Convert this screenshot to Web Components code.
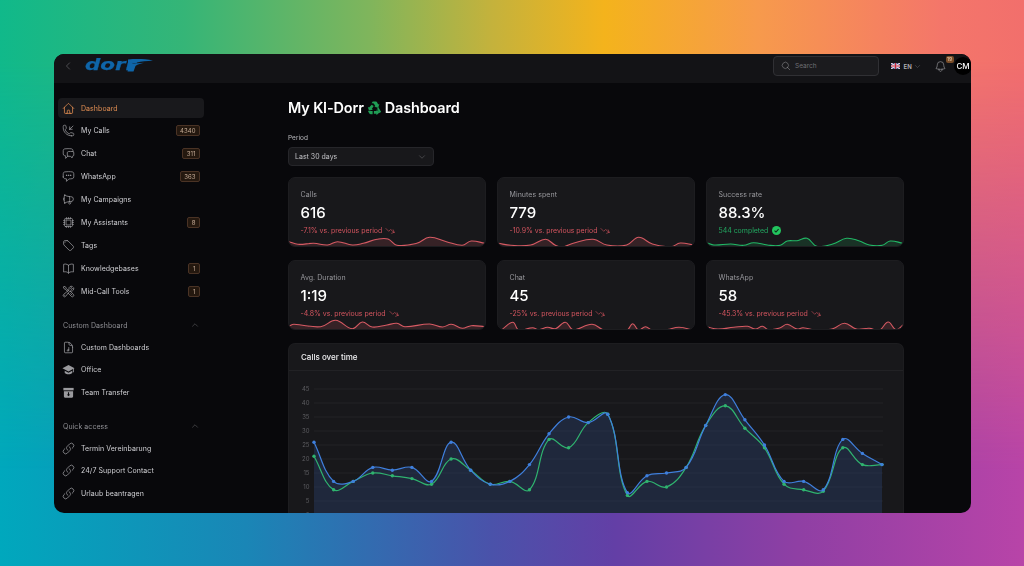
<!DOCTYPE html>
<html lang="en">
<head>
<meta charset="utf-8">
<title>Dashboard</title>
<style>
html, body { margin: 0; height: 100%; overflow: hidden; }
body {
    position: relative;
    font-family: Inter, "Liberation Sans", sans-serif;
    background: linear-gradient(90deg, #00a8bd 0%, #1a86b6 24%, #4a52aa 48%, #633fa6 60%, #8f3fa4 78%, #b844a8 100%);
}
body::before {
    content: "";
    position: absolute;
    inset: 0;
    background: linear-gradient(90deg, #10b98a 0%, #35b577 18%, #7fb55c 36%, #c4b23c 48%, #f4b31c 59%, #f79a4c 74%, #f4766a 92%, #f26f6c 100%);
    -webkit-mask-image: linear-gradient(180deg, #000 0, #000 60px, transparent 470px);
    mask-image: linear-gradient(180deg, #000 0, #000 60px, transparent 470px);
}
dash-page { position: relative; }
</style>
</head>
<body>
<dash-page>
    <top-bar></top-bar>
    <side-bar slot="side">
        <nav-item icon="home" active>Dashboard</nav-item>
        <nav-item icon="phone" badge="4340">My Calls</nav-item>
        <nav-item icon="chat" badge="311">Chat</nav-item>
        <nav-item icon="bubble" badge="363">WhatsApp</nav-item>
        <nav-item icon="megaphone">My Campaigns</nav-item>
        <nav-item icon="cpu" badge="8">My Assistants</nav-item>
        <nav-item icon="tag">Tags</nav-item>
        <nav-item icon="book" badge="1">Knowledgebases</nav-item>
        <nav-item icon="tools" badge="1">Mid-Call Tools</nav-item>
        <nav-section label="Custom Dashboard">
            <nav-item icon="doc">Custom Dashboards</nav-item>
            <nav-item icon="cap">Office</nav-item>
            <nav-item icon="box">Team Transfer</nav-item>
        </nav-section>
        <nav-section label="Quick access">
            <nav-item icon="link">Termin Vereinbarung</nav-item>
            <nav-item icon="link">24/7 Support Contact</nav-item>
            <nav-item icon="link">Urlaub beantragen</nav-item>
        </nav-section>
    </side-bar>
    <dash-main slot="main">
        <stat-card tone="down" points="0,8.7 9,11.3 25,10.3 39,12 49,8.7 64,12 75,10.3 89,6.3 100,6 109,12.3 129,10.3 142,4.3 159,8.7 175,12.3 184,8 198,10.3">
            <span slot="label">Calls</span>616<span slot="delta">-7.1% vs. previous period</span>
        </stat-card>
        <stat-card tone="down" points="0,10.3 13,12.3 33,12 48,6.3 58,12.3 65,14 76,10.3 96,6.3 110,12 130,12 142,4.3 156,11 175,13.7 184,10 198,12">
            <span slot="label">Minutes spent</span>779<span slot="delta">-10.9% vs. previous period</span>
        </stat-card>
        <stat-card tone="up" points="0,9.7 7,12 24,11 37,12.3 47,9.7 61,12 74,12.3 81,8 91,7.7 101,5.3 111,13.3 127,11 141,5.3 154,8 164,12 177,12.3 185,8 198,10.3">
            <span slot="label">Success rate</span>88.3%<span slot="delta">544 completed</span>
        </stat-card>
        <stat-card tone="down" points="0,10 5,8.3 32,10.7 47,4.3 64,12.7 74,6 84,11 99,9 109,7.3 117,10.7 142,8 155,11 164,8.3 175,12.3 184,9.7 198,10.7">
            <span slot="label">Avg. Duration</span>1:19<span slot="delta">-4.8% vs. previous period</span>
        </stat-card>
        <stat-card tone="down" points="0,14.3 3,14 15,6.3 21,14 35,11.7 41,13.7 50,11.3 58,12.7 68,6.3 76,13.7 95,8.3 108,14.3 130,14.3 136,7.7 142,14 149,10.7 156,14.3 170,13.7 183,11.3 198,14.3">
            <span slot="label">Chat</span>45<span slot="delta">-25% vs. previous period</span>
        </stat-card>
        <stat-card tone="down" points="0,11 11,13 27,11.3 41,10.3 49,13 56,10.3 62,13.7 74,11.7 81,8.3 91,13 97,11.7 111,14.3 127,12.7 139,7.3 151,13 164,12.3 174,14.3 183,6 191,13.7 198,9">
            <span slot="label">WhatsApp</span>58<span slot="delta">-45.3% vs. previous period</span>
        </stat-card>
        <line-chart slot="chart">Calls over time</line-chart>
    </dash-main>
</dash-page>

<script>
const ICONS = {
    home: '<path d="M2.25 12l8.954-8.955c.44-.439 1.152-.439 1.591 0L21.75 12M4.5 9.75v10.125c0 .621.504 1.125 1.125 1.125H9.75v-4.875c0-.621.504-1.125 1.125-1.125h2.25c.621 0 1.125.504 1.125 1.125V21h4.125c.621 0 1.125-.504 1.125-1.125V9.75M8.25 21h8.25"/>',
    phone: '<path d="M14.25 9.75v-4.5m0 4.5h4.5m-4.5 0l6-6m-3 18c-8.284 0-15-6.716-15-15V4.5A2.25 2.25 0 014.5 2.25h1.372c.516 0 .966.351 1.091.852l1.106 4.423c.11.44-.054.902-.417 1.173l-1.293.97a1.062 1.062 0 00-.38 1.21 12.035 12.035 0 007.143 7.143c.441.162.928-.004 1.21-.38l.97-1.293a1.125 1.125 0 011.173-.417l4.423 1.106c.5.125.852.575.852 1.091V19.5a2.25 2.25 0 01-2.25 2.25h-2.25z"/>',
    chat: '<path d="M20.25 8.511c.884.284 1.5 1.128 1.5 2.097v4.286c0 1.136-.847 2.1-1.98 2.193-.34.027-.68.052-1.02.072v3.091l-3-3c-1.354 0-2.694-.055-4.02-.163a2.115 2.115 0 01-.825-.242m9.345-8.334a2.126 2.126 0 00-.476-.095 48.64 48.64 0 00-8.048 0c-1.131.094-1.976 1.057-1.976 2.192v4.286c0 .837.46 1.58 1.155 1.951m9.345-8.334V6.637c0-1.621-1.152-3.026-2.76-3.235A48.455 48.455 0 0011.25 3c-2.115 0-4.198.137-6.24.402-1.608.209-2.76 1.614-2.76 3.235v6.226c0 1.621 1.152 3.026 2.76 3.235.577.075 1.157.14 1.74.194V21l4.155-4.155"/>',
    bubble: '<path d="M8.625 9.75a.375.375 0 11-.75 0 .375.375 0 01.75 0zm0 0H8.25m4.125 0a.375.375 0 11-.75 0 .375.375 0 01.75 0zm0 0H12m4.125 0a.375.375 0 11-.75 0 .375.375 0 01.75 0zm0 0h-.375m-13.5 3.01c0 1.6 1.123 2.994 2.707 3.227 1.087.16 2.185.283 3.293.369V21l4.184-4.183a1.14 1.14 0 01.778-.332 48.294 48.294 0 005.83-.498c1.585-.233 2.708-1.626 2.708-3.228V6.741c0-1.602-1.123-2.995-2.707-3.228A48.394 48.394 0 0012 3c-2.392 0-4.744.175-7.043.513C3.373 3.746 2.25 5.14 2.25 6.741v6.018z"/>',
    megaphone: '<g transform="matrix(-1 0 0 1 24 0)"><path d="M10.34 15.84c-.688-.06-1.386-.09-2.09-.09H7.5a4.5 4.5 0 110-9h.75c.704 0 1.402-.03 2.09-.09m0 9.18c.253.962.584 1.892.985 2.783.247.55.06 1.21-.463 1.511l-.657.38c-.551.318-1.26.117-1.527-.461a20.845 20.845 0 01-1.44-4.282m3.102.069a18.03 18.03 0 01-.59-4.59c0-1.586.205-3.124.59-4.59m0 9.18a23.848 23.848 0 018.835 2.535M10.34 6.66a23.847 23.847 0 008.835-2.535m0 0A23.74 23.74 0 0018.795 3m.38 1.125a23.91 23.91 0 011.014 5.395m-1.014 8.855c-.118.38-.245.754-.38 1.125m.38-1.125a23.91 23.91 0 001.014-5.395m0-3.46c.495.413.811 1.035.811 1.73 0 .695-.316 1.317-.811 1.73m0-3.46a24.347 24.347 0 010 3.46"/></g>',
    cpu: '<path d="M8.25 3v1.5M4.5 8.25H3m18 0h-1.5M4.5 12H3m18 0h-1.5m-15 3.75H3m18 0h-1.5M8.25 19.5V21M12 3v1.5m0 15V21m3.75-18v1.5m0 15V21m-9-1.5h10.5a2.25 2.25 0 002.25-2.25V6.75a2.25 2.25 0 00-2.25-2.25H6.75A2.25 2.25 0 004.5 6.75v10.5a2.25 2.25 0 002.25 2.25zm.75-12h9v9h-9v-9z"/>',
    tag: '<path d="M9.568 3H5.25A2.25 2.25 0 003 5.25v4.318c0 .597.237 1.17.659 1.591l9.581 9.581c.699.699 1.78.872 2.607.33a18.095 18.095 0 005.223-5.223c.542-.827.369-1.908-.33-2.607L11.16 3.66A2.25 2.25 0 009.568 3z"/><path d="M6 6h.008v.008H6V6z"/>',
    book: '<path d="M12 6.042A8.967 8.967 0 006 3.75c-1.052 0-2.062.18-3 .512v14.25A8.987 8.987 0 016 18c2.305 0 4.408.867 6 2.292m0-14.25a8.966 8.966 0 016-2.292c1.052 0 2.062.18 3 .512v14.25A8.987 8.987 0 0018 18a8.967 8.967 0 00-6 2.292m0-14.25v14.25"/>',
    tools: '<path d="M11.42 15.17L17.25 21A2.652 2.652 0 0021 17.25l-5.877-5.877M11.42 15.17l2.496-3.03c.317-.384.74-.626 1.208-.766M11.42 15.17l-4.655 5.653a2.548 2.548 0 11-3.586-3.586l6.837-5.63m5.108-.233c.55-.164 1.163-.188 1.743-.14a4.5 4.5 0 004.486-6.336l-3.276 3.277a3.004 3.004 0 01-2.25-2.25l3.276-3.276a4.5 4.5 0 00-6.336 4.486c.091 1.076-.071 2.264-.904 2.95l-.102.085m-1.745 1.437L5.909 7.5H4.5L2.25 3.75l1.5-1.5L7.5 4.5v1.409l4.26 4.26m-1.745 1.437l1.745-1.437m6.615 8.206L15.75 15.75M4.867 19.125h.008v.008h-.008v-.008z"/>',
    doc: '<path d="M19.5 11.25v9.375c0 .621-.504 1.125-1.125 1.125H5.625c-.621 0-1.125-.504-1.125-1.125V3.375c0-.621.504-1.125 1.125-1.125H10.5a9 9 0 019 9z"/><path d="M13 2.6v3.4c0 1.2 1 2.2 2.2 2.2h3.4"/><path d="M12.5 12v5.2m0 0a1.4 1.4 0 11-1.4-1.2h1.4"/>',
    cap: '<path fill="currentColor" stroke="none" d="M12 3.6L.8 9.6 12 15.6l8.2-4.4v6h1.6V10.3l1.4-.7z"/><path fill="currentColor" stroke="none" d="M5 14.4v4.2c3.6 3 10.4 3 14 0v-4.2l-7 3.8z"/>',
    box: '<path fill="currentColor" stroke="none" d="M2.5 3.5h19v4.5h-19z"/><path fill="currentColor" stroke="none" fill-rule="evenodd" d="M3.5 9.5h17v10a2 2 0 01-2 2h-13a2 2 0 01-2-2zM11 11.5v4H8.8l3.2 3.6 3.2-3.6H13v-4z"/>',
    link: '<path d="M13.19 8.688a4.5 4.5 0 011.242 7.244l-4.5 4.5a4.5 4.5 0 01-6.364-6.364l1.757-1.757m13.35-.622l1.757-1.757a4.5 4.5 0 00-6.364-6.364l-4.5 4.5a4.5 4.5 0 001.242 7.244"/>',
    up: '<path d="M4.5 15.75l7.5-7.5 7.5 7.5"/>',
    down: '<path d="M19.5 8.25l-7.5 7.5-7.5-7.5"/>',
    left: '<path d="M15.75 19.5L8.25 12l7.5-7.5"/>',
    search: '<path d="M21 21l-5.197-5.197m0 0A7.5 7.5 0 105.196 5.196a7.5 7.5 0 0010.607 10.607z"/>',
    bell: '<path d="M14.857 17.082a23.848 23.848 0 005.454-1.31A8.967 8.967 0 0118 9.75V9A6 6 0 006 9v.75a8.967 8.967 0 01-2.312 6.022c1.733.64 3.56 1.085 5.455 1.31m5.714 0a24.255 24.255 0 01-5.714 0m5.714 0a3 3 0 11-5.714 0"/>',
    trend: '<path d="M2.25 6L9 12.75l4.306-4.307a11.95 11.95 0 015.814 5.519l2.74 1.22m0 0l-5.94 2.28m5.94-2.28l-2.28-5.941"/>'
};

// spline weighted by segment length, short segments next to long ones don't overshoot
function smooth(pts, t) {
    const ctrl = pts.map((cur, i) => {
        const prev = pts[i - 1] || cur, next = pts[i + 1] || cur;
        const d01 = Math.hypot(cur[0] - prev[0], cur[1] - prev[1]);
        const d12 = Math.hypot(next[0] - cur[0], next[1] - cur[1]);
        const sum = d01 + d12 || 1;
        const fa = t * d01 / sum, fb = t * d12 / sum;
        return {
            inX: cur[0] - fa * (next[0] - prev[0]), inY: cur[1] - fa * (next[1] - prev[1]),
            outX: cur[0] + fb * (next[0] - prev[0]), outY: cur[1] + fb * (next[1] - prev[1])
        };
    });
    let d = `M${pts[0][0]} ${pts[0][1]}`;
    for (let i = 1; i < pts.length; i++) {
        const a = ctrl[i - 1], b = ctrl[i];
        d += `C${a.outX.toFixed(2)} ${a.outY.toFixed(2)} ${b.inX.toFixed(2)} ${b.inY.toFixed(2)} ${pts[i][0].toFixed(2)} ${pts[i][1].toFixed(2)}`;
    }
    return d;
}

class appIcon extends HTMLElement {
    static get observedAttributes() { return ['name']; }
    constructor() {
        super();
        this.attachShadow({ mode: 'open' });
        this.shadowRoot.innerHTML = `
            <style>
                :host{display:inline-flex;width:13px;height:13px;flex:none}
                svg{width:100%;height:100%;display:block;fill:none;stroke:currentColor;stroke-width:1.4;stroke-linecap:round;stroke-linejoin:round}
            </style>
            <svg viewBox="0 0 24 24"></svg>`;
    }
    attributeChangedCallback() {
        this.shadowRoot.querySelector('svg').innerHTML = ICONS[this.getAttribute('name')] || '';
    }
}
customElements.define('app-icon', appIcon);

const dash_page = document.createElement('template');
dash_page.innerHTML = `
    <style>
        :host{display:block;padding:54px 0 0 54px;height:566px;box-sizing:border-box}
        .window{width:917px;height:459px;border-radius:10px;overflow:hidden;background:#08080b;display:flex;flex-direction:column;filter:blur(.3px)}
        .body{display:flex;flex:1;min-height:0}
    </style>
    <div class="window">
        <slot></slot>
        <div class="body">
            <slot name="side"></slot>
            <slot name="main"></slot>
        </div>
    </div>
`;
class dashPage extends HTMLElement {
    constructor() {
        super();
        this.attachShadow({ mode: 'open' });
        this.shadowRoot.appendChild(dash_page.content.cloneNode(true));
    }
}
customElements.define('dash-page', dashPage);

const top_bar = document.createElement('template');
top_bar.innerHTML = `
    <style>
        :host{display:flex;align-items:center;height:24px;padding:0 0 5px 9px;flex:none;background:#131316;color:#8b8b90;font-size:6.5px}
        .back{width:10px;height:10px;color:#77777c;margin-right:12px}
        .logo{position:relative;width:70px;height:22px;display:block}
        .logo span{position:absolute;left:0;top:-3.5px;font:italic 700 15.5px/26px "DejaVu Sans",sans-serif;color:#0f65a8;-webkit-text-stroke:.25px #0f65a8;transform:scaleX(1.38);transform-origin:left center}
        .logo svg{position:absolute;left:40px;top:0;width:30px;height:22px}
        .right{margin-left:auto;display:flex;align-items:center}
        .search{width:106px;height:20px;box-sizing:border-box;margin-right:12px;background:#1b1b1e;border:1px solid #303034;border-radius:4px;display:flex;align-items:center;padding-left:7px;gap:4px;color:#6f6f74}
        .search app-icon{width:10px;height:10px;color:#88888c}
        .flag{width:9px;height:6px;display:block}
        .lang{display:flex;align-items:center;gap:3.5px;color:#b4b4b8;font-weight:600;width:37px;font-size:6px}
        .lang app-icon{width:7px;height:7px;margin-left:-1px;color:#77777c}
        .bell{position:relative;width:13px;height:13px;margin-right:7px;margin-left:6px;color:#88888c}
        .bell app-icon{width:13px;height:13px}
        .count{position:absolute;left:11.5px;top:-3.5px;width:8px;height:7px;border-radius:2px;background:#7a4d28;color:#ecd2b4;font-size:5px;line-height:7px;text-align:center}
        .avatar{width:18px;height:18px;border-radius:50%;background:#000;color:#fff;font-size:8px;line-height:18px;text-align:center;font-weight:500;margin-right:-1px}
    </style>
    <app-icon class="back" name="left"></app-icon>
    <div class="logo">
        <span>dorr</span>
        <svg viewBox="0 0 30 22"><path fill="#0f65a8" d="M3 4.5C12 3.800 20 4 28 5.500 22 6 16 6.500 12 7.500L3 8zM4 9l15-1.300C15 8.500 12 9.500 10.500 11l-2 5.500-6 0z"/></svg>
    </div>
    <div class="right">
        <div class="search"><app-icon name="search"></app-icon>Search</div>
        <div class="lang">
            <svg class="flag" viewBox="0 0 18 12"><rect width="18" height="12" fill="#2b3a78"/><path d="M0 0l18 12M18 0L0 12" stroke="#e8dfe4" stroke-width="2.4"/><path d="M9 0v12M0 6h18" stroke="#e8dfe4" stroke-width="4"/><path d="M9 0v12M0 6h18" stroke="#c8283f" stroke-width="2.2"/></svg>
            EN<app-icon name="down"></app-icon>
        </div>
        <div class="bell"><app-icon name="bell"></app-icon><span class="count">19</span></div>
        <div class="avatar">CM</div>
    </div>
`;
class topBar extends HTMLElement {
    constructor() {
        super();
        this.attachShadow({ mode: 'open' });
        this.shadowRoot.appendChild(top_bar.content.cloneNode(true));
    }
}
customElements.define('top-bar', topBar);

const side_bar = document.createElement('template');
side_bar.innerHTML = `
    <style>
        :host{display:flex;flex-direction:column;gap:2.9px;width:146px;flex:none;padding:15px 0 0 4px}
    </style>
    <slot></slot>
`;
class sideBar extends HTMLElement {
    constructor() {
        super();
        this.attachShadow({ mode: 'open' });
        this.shadowRoot.appendChild(side_bar.content.cloneNode(true));
    }
}
customElements.define('side-bar', sideBar);

const nav_item = document.createElement('template');
nav_item.innerHTML = `
    <style>
        :host{display:flex;align-items:center;height:20px;flex:none;padding:0 4px 0 4px;border-radius:4px;color:#d0d0d4;font-size:7px;letter-spacing:.06px}
        :host([active]){background:#19191c;color:#e08d52}
        app-icon{margin-right:6px;color:#9a9a9e}
        :host([active]) app-icon{color:#e08d52}
        .label{flex:1;white-space:nowrap}
        .badge{display:none;height:11px;line-height:10px;box-sizing:border-box;padding:0 3.5px;border-radius:2px;border:1px solid #4a3325;background:#24180f;color:#c4ab96;font-size:6px}
        :host([badge]) .badge{display:block}
    </style>
    <app-icon></app-icon>
    <span class="label"><slot></slot></span>
    <span class="badge"></span>
`;
class navItem extends HTMLElement {
    constructor() {
        super();
        this.attachShadow({ mode: 'open' });
        this.shadowRoot.appendChild(nav_item.content.cloneNode(true));
    }
    connectedCallback() {
        this.shadowRoot.querySelector('app-icon').setAttribute('name', this.getAttribute('icon'));
        this.shadowRoot.querySelector('.badge').textContent = this.getAttribute('badge') || '';
    }
}
customElements.define('nav-item', navItem);

const nav_section = document.createElement('template');
nav_section.innerHTML = `
    <style>
        :host{display:flex;flex-direction:column;gap:2.4px;margin-top:11px}
        .head{display:flex;align-items:center;justify-content:space-between;height:20px;padding:0 5px 0 5px;color:#8f8f94;font-size:7px;letter-spacing:.06px}
        .head app-icon{width:8px;height:8px;color:#77777c}
    </style>
    <div class="head"><span class="title"></span><app-icon name="up"></app-icon></div>
    <slot></slot>
`;
class navSection extends HTMLElement {
    constructor() {
        super();
        this.attachShadow({ mode: 'open' });
        this.shadowRoot.appendChild(nav_section.content.cloneNode(true));
    }
    connectedCallback() {
        this.shadowRoot.querySelector('.title').textContent = this.getAttribute('label');
    }
}
customElements.define('nav-section', navSection);

const dash_main = document.createElement('template');
dash_main.innerHTML = `
    <style>
        :host{display:block;flex:1;min-width:0;padding:14px 67px 0 84px}
        h1{margin:0;display:flex;align-items:center;gap:3px;height:20px;font-size:14.4px;font-weight:600;color:#fff;letter-spacing:-.12px;white-space:nowrap}
        h1 svg{width:15px;height:15px;display:block}
        label{display:block;margin-top:16px;height:10px;line-height:10px;font-size:6.5px;color:#b9b9bd}
        .select{margin-top:4px;width:146px;height:19px;box-sizing:border-box;display:flex;align-items:center;justify-content:space-between;padding:0 7px 0 6px;background:#18181b;border:1px solid #26262a;border-radius:4px;color:#c2c2c6;font-size:7px}
        .select app-icon{width:8px;height:8px;color:#77777c}
        .grid{margin-top:11px;display:grid;grid-template-columns:repeat(3,198px);grid-auto-rows:70px;column-gap:11px;row-gap:13px}
        .chart{margin-top:13px}
    </style>
    <h1>My KI-Dorr
        <svg viewBox="0 0 24 24" role="img" aria-label="recycling symbol"><g fill="#1f9d55"><path d="M9.2 2.4h5.2c.6 0 1.1.3 1.4.8l2.2 3.9 1.9-1.1-2 6.4-6.4-1.500 1.900-1.100-2.100-3.600c-.3-.6-.9-.9-1.500-.9H7.400l.4-.8c.3-.5.8-1 1.400-2zM7.500 7.600l3.200 1.800-3 4.900 1.900 1.100-6.500 1.500L1.300 11l2 1.100z"/><path d="M3.200 17.400l5.800.2v5.200H6.200c-1.200 0-2.100-.6-2.700-1.600L1.700 18c.3-.5.8-.7 1.500-.6zM11 17.500h4.400l-.1-2.300 4.600 4.800-4.700 4.200-.1-2.200-4.100.1zM17.600 10.600l4.900 8.200c-.6 1.100-1.500 1.700-2.600 1.800l-3.600-6.400z"/></g></svg>
        Dashboard</h1>
    <label>Period</label>
    <div class="select">Last 30 days<app-icon name="down"></app-icon></div>
    <div class="grid"><slot></slot></div>
    <div class="chart"><slot name="chart"></slot></div>
`;
class dashMain extends HTMLElement {
    constructor() {
        super();
        this.attachShadow({ mode: 'open' });
        this.shadowRoot.appendChild(dash_main.content.cloneNode(true));
    }
}
customElements.define('dash-main', dashMain);

const stat_card = document.createElement('template');
stat_card.innerHTML = `
    <style>
        :host{display:flex;flex-direction:column;box-sizing:border-box;height:70px;background:#18181b;border:1px solid #1d1d20;border-radius:7px;overflow:hidden;color:#d65a63}
        :host([tone=up]){color:#22b866}
        .text{flex:none;height:55px;padding:10.5px 0 0 11.5px;box-sizing:border-box}
        .label{height:11px;line-height:11px;font-size:7px;color:#98989d;letter-spacing:.06px}
        .value{height:21px;line-height:21px;margin-top:2px;font-size:15px;font-weight:500;color:#fff}
        .delta{display:flex;align-items:center;gap:3px;height:11px;line-height:11px;margin-top:2.5px;font-size:7px;letter-spacing:-.03px}
        .delta app-icon{width:10px;height:10px}
        .check{width:9px;height:9px;display:none;margin-left:1px}
        :host([tone=up]) .check{display:block}
        :host([tone=up]) .delta app-icon{display:none}
        :host([tone=up]) .delta{color:#22a660}
        :host([tone=down]) .delta{color:#d4555f}
        svg.spark{display:block;width:100%;height:14px;flex:none}
    </style>
    <div class="text">
        <div class="label"><slot name="label"></slot></div>
        <div class="value"><slot></slot></div>
        <div class="delta"><slot name="delta"></slot><app-icon name="trend"></app-icon>
            <svg class="check" viewBox="0 0 10 10"><circle cx="5" cy="5" r="5" fill="#22c55e"/><path d="M2.800 5.200l1.600 1.500 2.900-3.200" fill="none" stroke="#0f2c1b" stroke-width="1.200"/></svg>
        </div>
    </div>
    <svg class="spark" viewBox="0 0 198 14" preserveAspectRatio="none"></svg>
`;
class statCard extends HTMLElement {
    constructor() {
        super();
        this.attachShadow({ mode: 'open' });
        this.shadowRoot.appendChild(stat_card.content.cloneNode(true));
    }
    connectedCallback() {
        const pts = this.getAttribute('points').split(' ').map(p => p.split(',').map(Number));
        const line = smooth(pts, 0.4);
        this.shadowRoot.querySelector('svg.spark').innerHTML = `
            <path d="${line}L198 14L0 14Z" fill="currentColor" fill-opacity=".16"/>
            <path d="${line}" fill="none" stroke="currentColor" stroke-width="1.100"/>`;
    }
}
customElements.define('stat-card', statCard);

const line_chart = document.createElement('template');
line_chart.innerHTML = `
    <style>
        :host{display:block;background:#18181b;border:1px solid #1d1d20;border-bottom:0;border-radius:7px 7px 0 0;overflow:hidden}
        .head{height:27px;line-height:27px;padding-left:12px;border-bottom:1px solid #222225;font-size:8px;font-weight:500;color:#f0f0f2;box-sizing:border-box}
        svg{display:block;width:614px;height:160px}
        text{font:6px Inter,"Liberation Sans",sans-serif;fill:#5c5c60;text-anchor:end}
    </style>
    <div class="head"><slot></slot></div>
    <svg viewBox="0 0 614 160"></svg>
`;
class lineChart extends HTMLElement {
    constructor() {
        super();
        this.attachShadow({ mode: 'open' });
        this.shadowRoot.appendChild(line_chart.content.cloneNode(true));
    }
    connectedCallback() {
        const blue = [26,12,12,17,16,17,12,26,16,11,12,18,29,35,33,36,8,14,15,17,32,43,34,25,12,12,9,27,22,18];
        const green = [21,9,12,15,14,13,11,20,16,11,12,9,27,24,33,36,7,12,10,17,32,39,31,24,11,9,8.500,24,18,18];
        const X = i => 25 + i * 19.586;
        const Y = v => 144 - 2.8 * v;
        const toPts = arr => arr.map((v, i) => [X(i), Y(v)]);
        const dots = (pts, c) => pts.map(p => `<circle cx="${p[0].toFixed(2)}" cy="${p[1].toFixed(2)}" r="1.700" fill="${c}"/>`).join('');
        let grid = '';
        for (let v = 0; v <= 45; v += 5) {
            grid += `<path d="M25 ${Y(v)}H594" stroke="#fff" stroke-opacity=".07" stroke-width=".7"/>`;
            grid += `<text x="20.500" y="${Y(v) + 2}">${v}</text>`;
        }
        const bp = toPts(blue), gp = toPts(green);
        const bl = smooth(bp, 0.4), gl = smooth(gp, 0.4);
        this.shadowRoot.querySelector('svg').innerHTML = `
            ${grid}
            <path d="${bl}L${X(29)} 160L25 160Z" fill="#2c4678" fill-opacity=".36"/>
            <path d="${gl}" fill="none" stroke="#2fb36f" stroke-width="1.200"/>
            ${dots(gp, '#2fb36f')}
            <path d="${bl}" fill="none" stroke="#3f7fdc" stroke-width="1.200"/>
            ${dots(bp, '#3f7fdc')}`;
    }
}
customElements.define('line-chart', lineChart);
</script>
</body>
</html>
